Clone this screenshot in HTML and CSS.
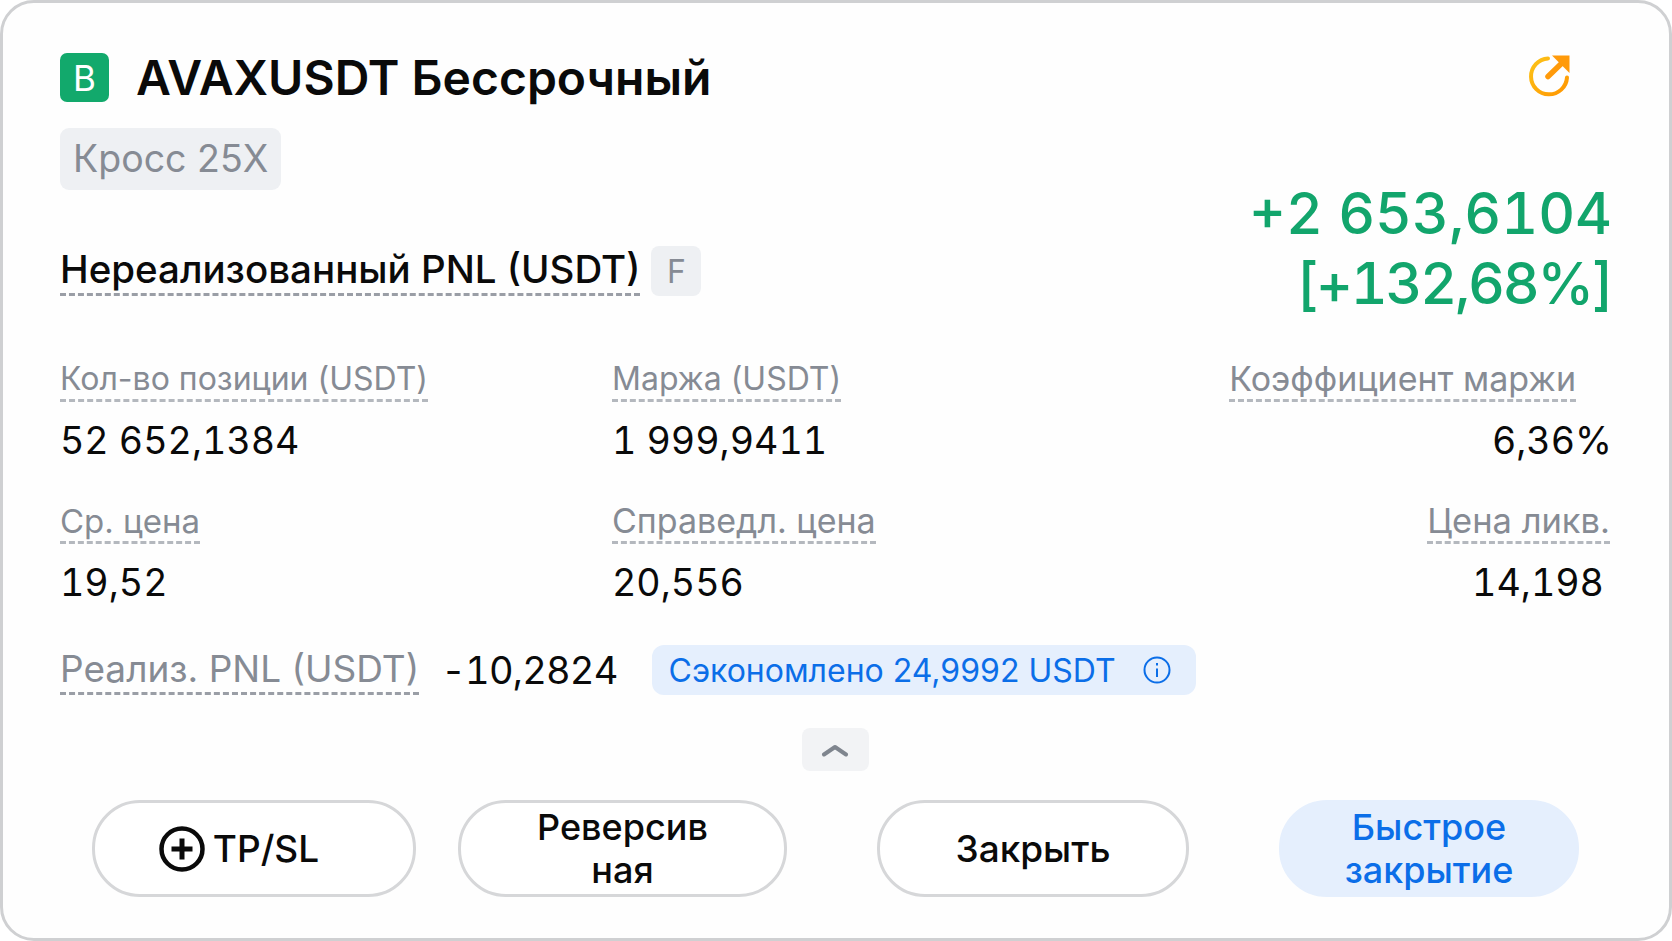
FILE: index.html
```html
<!DOCTYPE html>
<html lang="ru">
<head>
    <meta charset="UTF-8">
    <meta name="viewport" content="width=device-width, initial-scale=1.0">
    <title>AVAXUSDT Бессрочный</title>
    <link rel="stylesheet" href="styles.css">
</head>
<body>
    <div class="card">
        <!-- Заголовок -->
        <div class="head">
            <span class="side-badge">B</span>
            <h1 class="title">AVAXUSDT Бессрочный</h1>
            <svg class="share" viewBox="0 0 42 42" width="42" height="42" fill="none">
                <defs>
                    <linearGradient id="shareGrad" x1="0" y1="0" x2="1" y2="1">
                        <stop offset="0" stop-color="#fcc419"/>
                        <stop offset="1" stop-color="#ff9500"/>
                    </linearGradient>
                </defs>
                <path d="M20 3.4A18 18 0 1 0 39 22.5" stroke="url(#shareGrad)" stroke-width="4" stroke-linecap="round"/>
                <path d="M20 21.5L35 7" stroke="#ff9a0a" stroke-width="5.5" stroke-linecap="round"/>
                <path d="M24 0.5H41.5V18Z" fill="#ff9a0a"/>
            </svg>
        </div>

        <!-- PNL -->
        <div class="pnl">
            <div class="pnl-left">
                <span class="tag">Кросс 25X</span>
                <div class="pnl-label">
                    <span class="dashed strong">Нереализованный PNL (USDT)</span>
                    <span class="chip">F</span>
                </div>
            </div>
            <div class="pnl-value">
                <div>+2 653,6104</div>
                <div class="pnl-percent">[+132,68%]</div>
            </div>
        </div>

        <!-- Показатели -->
        <div class="stats">
            <div class="stat">
                <span class="dashed label">Кол-во позиции (USDT)</span>
                <span class="value">52 652,1384</span>
            </div>
            <div class="stat">
                <span class="dashed label">Маржа (USDT)</span>
                <span class="value">1 999,9411</span>
            </div>
            <div class="stat stat-right">
                <span class="dashed label label-wide label-inset">Коэффициент маржи</span>
                <span class="value">6,36%</span>
            </div>
            <div class="stat">
                <span class="dashed label label-mid">Ср. цена</span>
                <span class="value">19,52</span>
            </div>
            <div class="stat">
                <span class="dashed label label-wide">Справедл. цена</span>
                <span class="value">20,556</span>
            </div>
            <div class="stat stat-right">
                <span class="dashed label label-wider">Цена ликв.</span>
                <span class="value value-inset">14,198</span>
            </div>
        </div>

        <div class="realized">
            <span class="dashed realized-label">Реализ. PNL (USDT)</span>
            <span class="realized-value">-10,2824</span>
            <span class="saved">
                Сэкономлено 24,9992 USDT
                <svg viewBox="0 0 28 28" width="28" height="28" fill="none" stroke="#0b6ee8" stroke-width="2">
                    <circle cx="14" cy="14" r="12.5"/>
                    <path d="M14 12.5V21"/>
                    <path d="M14 7V9.6"/>
                </svg>
            </span>
        </div>

        <div class="collapse">
            <span class="collapse-btn">
                <svg viewBox="0 0 28 14" width="28" height="14" fill="none" stroke="#7f858e" stroke-width="4" stroke-linecap="round" stroke-linejoin="round">
                    <path d="M3 11.5L14 4L25 11.5"/>
                </svg>
            </span>
        </div>

        <!-- Кнопки -->
        <div class="actions">
            <button class="btn btn-tpsl">
                <svg viewBox="0 0 46 46" width="46" height="46" fill="none" stroke="#0a0a0a">
                    <circle cx="23" cy="23" r="20.5" stroke-width="4.5"/>
                    <path d="M23 12.5V33.5M12.5 23H33.5" stroke-width="5"/>
                </svg>
                TP/SL
            </button>
            <button class="btn btn-reverse">Реверсив<br>ная</button>
            <button class="btn btn-close">Закрыть</button>
            <button class="btn btn-quick">Быстрое<br>закрытие</button>
        </div>
    </div>
</body>
</html>
```

FILE: styles.css
```css
* {
    box-sizing: border-box;
}

body {
    margin: 0;
    background-color: #fff;
    font-family: Inter, "Noto Sans", sans-serif;
    color: #0a0a0a;
}

.card {
    width: 1672px;
    height: 941px;
    padding: 50px 57px 0 57px;
    background-color: #fefefe;
    border: 3px solid #cfd0d2;
    border-radius: 34px;
}

.head {
    display: flex;
    align-items: center;
    height: 49px;
}

.side-badge {
    display: flex;
    align-items: center;
    justify-content: center;
    width: 49px;
    height: 49px;
    background-color: #12a96c;
    border-radius: 7px;
    color: #fff;
    font-size: 35px;
}

.title {
    margin: 0 0 0 27px;
    font-size: 48px;
    font-weight: 600;
}

.share {
    margin-left: auto;
    margin-right: 42px;
    margin-bottom: 3px;
}

.pnl {
    display: flex;
    justify-content: space-between;
    align-items: flex-start;
}

.pnl-left {
    display: flex;
    flex-direction: column;
    align-items: flex-start;
}

.tag {
    margin-top: 26px;
    padding: 0 13px;
    height: 62px;
    line-height: 62px;
    background-color: #eef0f3;
    border-radius: 9px;
    color: #868b94;
    font-size: 37.5px;
}

.pnl-label {
    display: flex;
    align-items: flex-end;
    gap: 11px;
    margin-top: 56px;
}

.dashed {
    border-bottom: 3px dashed #9a9ea6;
}

.strong {
    font-size: 38.5px;
    font-weight: 500;
    line-height: 46px;
    padding-bottom: 1px;
}

.chip {
    display: flex;
    align-items: center;
    justify-content: center;
    width: 50px;
    height: 50px;
    background-color: #eef0f3;
    border-radius: 8px;
    color: #868b94;
    font-size: 32px;
}

.pnl-value {
    margin-top: 77px;
    color: #12a56c;
    font-size: 57px;
    font-weight: 500;
    font-variant-numeric: tabular-nums;
    line-height: 70px;
    text-align: right;
}

.pnl-percent {
    letter-spacing: -2.2px;
}

.stats {
    display: grid;
    grid-template-columns: 552px 1fr auto;
    row-gap: 37px;
    margin-top: 40px;
}

.stat {
    display: flex;
    flex-direction: column;
    align-items: flex-start;
}

.stat-right {
    align-items: flex-end;
}

.label {
    color: #868b94;
    font-size: 32px;
    line-height: 40px;
    border-bottom-color: #b4b8be;
}

.label-mid {
    font-size: 33px;
}

.label-wide {
    font-size: 34px;
}

.label-wider {
    margin-right: 2px;
    font-size: 34.5px;
}

.label-inset {
    margin-right: 36px;
}

.value {
    margin-top: 16px;
    font-size: 37.6px;
    font-variant-numeric: tabular-nums;
    line-height: 46px;
}

.value-inset {
    margin-right: 8px;
}

.realized {
    display: flex;
    align-items: center;
    margin-top: 39px;
}

.realized-label {
    color: #868b94;
    font-size: 37px;
    line-height: 46px;
}

.realized-value {
    margin-left: 22px;
    font-size: 38px;
    font-variant-numeric: tabular-nums;
    letter-spacing: -0.8px;
}

.saved {
    display: flex;
    align-items: center;
    justify-content: space-between;
    width: 544px;
    height: 50px;
    margin-left: 34px;
    padding: 0 25px 0 17px;
    background-color: #e5effd;
    border-radius: 12px;
    color: #0b6ee8;
    font-size: 32px;
}

.collapse {
    display: flex;
    justify-content: center;
    margin-top: 33px;
    padding-right: 2px;
}

.collapse-btn {
    display: flex;
    align-items: center;
    justify-content: center;
    width: 67px;
    height: 43px;
    background-color: #f2f3f5;
    border-radius: 8px;
}

.actions {
    display: flex;
    margin-top: 29px;
    padding-left: 32px;
}

.btn {
    display: flex;
    align-items: center;
    justify-content: center;
    height: 97px;
    background-color: #fff;
    border: 3px solid #d6d7d9;
    border-radius: 48px;
    color: #0a0a0a;
    font-family: inherit;
    font-size: 36px;
    font-weight: 500;
    line-height: 43px;
    text-align: center;
}

.btn-tpsl {
    gap: 8px;
    width: 324px;
    padding-right: 36px;
    font-size: 37px;
}

.btn-reverse {
    width: 329px;
    margin-left: 42px;
}

.btn-close {
    width: 312px;
    margin-left: 90px;
    font-size: 37px;
}

.btn-quick {
    width: 300px;
    margin-left: 90px;
    background-color: #e5effd;
    border-color: #e5effd;
    color: #0b6ee8;
}
```
